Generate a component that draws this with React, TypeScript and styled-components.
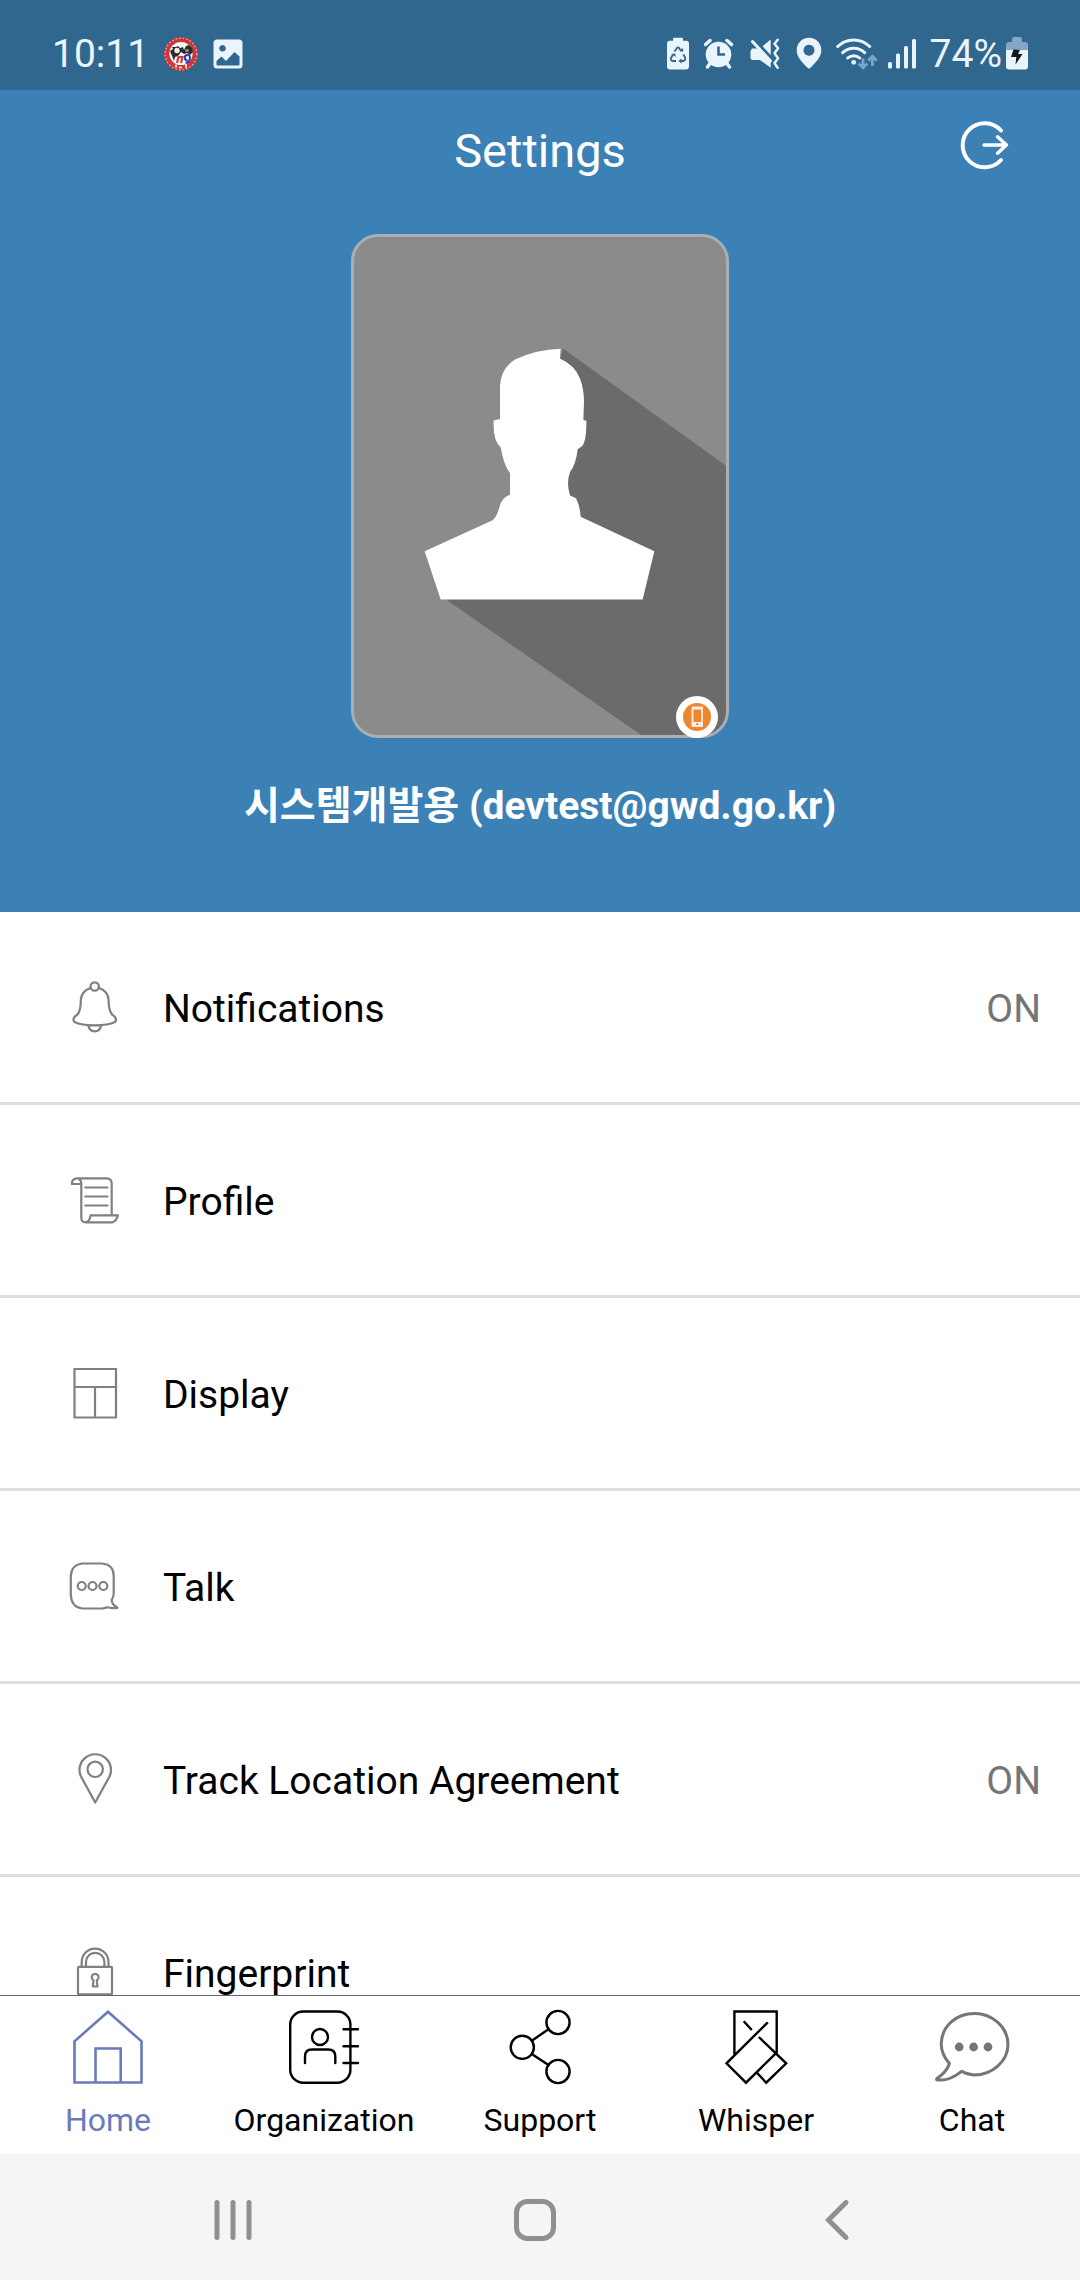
import React from "react";
import styled, { createGlobalStyle } from "styled-components";

const colors = {
  status: "#30678f",
  brand: "#3c81b6",
  statusInk: "#eaf4fc",
  divider: "#dedede",
  icon: "#808080",
  muted: "#757575",
  active: "#6b7abb",
  navIcon: "#909090",
};

const GlobalStyle = createGlobalStyle`
  * { box-sizing: border-box; }
  body {
    margin: 0;
    background: #fff;
    font-family: Roboto, "Noto Sans CJK KR", sans-serif;
  }
  button { font: inherit; border: 0; background: none; padding: 0; cursor: pointer; }
  svg { display: block; flex: none; }
`;

const Screen = styled.div`
  display: flex;
  flex-direction: column;
  height: 100vh;
  overflow: hidden;
`;

const StatusBar = styled.div`
  flex: none;
  display: flex;
  align-items: center;
  justify-content: space-between;
  height: 90px;
  padding: 18px 52px 0;
  background: ${colors.status};
  color: ${colors.statusInk};
  font-size: 39px;
  line-height: 44px;
`;

const StatusGroup = styled.div<{ $gap: number }>`
  display: flex;
  align-items: center;
  gap: ${(p) => p.$gap}px;
`;

const Content = styled.main`
  flex: 1;
  min-height: 0;
  overflow-y: auto;
  scrollbar-width: none;
`;

const ProfileHeader = styled.header`
  display: flex;
  flex-direction: column;
  align-items: center;
  padding-bottom: 78px;
  background: ${colors.brand};
  color: #fff;
`;

const TitleBar = styled.div`
  display: grid;
  grid-template-columns: 1fr auto 1fr;
  align-items: center;
  width: 100%;
  height: 122px;
  padding: 0 68px;
`;

const Title = styled.h1`
  grid-column: 2;
  margin: 0;
  font-size: 47px;
  font-weight: 400;
  line-height: 56px;
`;

const LogoutButton = styled.button`
  justify-self: end;
  padding-bottom: 12px;
  color: #fff;
`;

const AvatarFrame = styled.div`
  position: relative;
  margin-top: 22px;
`;

const Avatar = styled.div`
  width: 378px;
  height: 504px;
  border: 3px solid #a8b0b5;
  border-radius: 27px;
  overflow: hidden;
  background: #8b8b8b;
`;

const DeviceBadge = styled.span`
  position: absolute;
  right: 11px;
  bottom: 0;
`;

const UserName = styled.p`
  margin: 40px 0 0;
  font-size: 39px;
  font-weight: 700;
  line-height: 56px;
`;

const SettingsList = styled.ul`
  margin: 0;
  padding: 0;
  list-style: none;
`;

const SettingsItem = styled.li`
  border-bottom: 3px solid ${colors.divider};
`;

const SettingsButton = styled.button`
  display: flex;
  align-items: center;
  gap: 41px;
  width: 100%;
  height: 190px;
  padding: 0 39px 0 68px;
  color: #000;
  font-size: 39px;
  line-height: 48px;
  text-align: left;
`;

const ItemLabel = styled.span`
  flex: 1;
  padding-top: 4px;
`;

const ItemValue = styled.span`
  padding-top: 4px;
  color: ${colors.muted};
`;

const TabBar = styled.nav`
  flex: none;
  display: grid;
  grid-template-columns: repeat(5, 1fr);
  height: 159px;
  padding-top: 13px;
  border-top: 1px solid #666;
  background: #fff;
`;

const TabLink = styled.a<{ $active?: boolean }>`
  display: flex;
  flex-direction: column;
  align-items: center;
  gap: 15px;
  color: ${(p) => (p.$active ? colors.active : "#000")};
  font-size: 32px;
  line-height: 40px;
  text-decoration: none;
`;

const SystemNav = styled.nav`
  flex: none;
  display: grid;
  grid-template-columns: repeat(3, 1fr);
  height: 126px;
  padding: 6px 92px 0 82px;
  background: #f5f5f5;
`;

const SystemButton = styled.button`
  display: flex;
  align-items: center;
  justify-content: center;
  color: ${colors.navIcon};
`;

const StatusIcon = ({ width, children }: { width: number; children: React.ReactNode }) => (
  <svg width={width} height="36" viewBox={`0 0 ${width} 36`} fill={colors.statusInk} aria-hidden="true">
    {children}
  </svg>
);

const EmblemIcon = () => (
  <StatusIcon width={36}>
    <circle cx="18" cy="18" r="17" fill="#c9363b" />
    <circle cx="18" cy="18" r="15.8" fill="none" stroke="#e9b3b3" strokeWidth="1.2" strokeDasharray="1.6 2" />
    <circle cx="18" cy="17.5" r="11.6" fill="#fdfaf4" />
    <path d="M7 15l3-2-1-2 4 0 2-1 2 2 3-1 1 3 2-4 3-1 3 3 1 4-3 3-3-2-3 1-3-2-3 4-3 1-1 4-2-5z" fill="#2b2b33" />
    <circle cx="14" cy="14.5" r="2.7" fill="#f6eee6" />
    <circle cx="24" cy="14.500" r="1.800" fill="#8f8f6a" />
    <path d="M14 27l1.500-6.500M15.500 21h4L18 27" fill="none" stroke="#d23a3f" strokeWidth="2.200" />
    <path d="M27 21.500a2.600 2.600 0 1 0-2.500 2.800M27 21.500c0 3-2 5-4.500 5.500" fill="none" stroke="#2b3fa8" strokeWidth="2" />
    <path d="M13 31.500v-3M16 31.500h3M23 28v4" stroke="#fff" strokeWidth="1.600" />
  </StatusIcon>
);

const PictureIcon = () => (
  <StatusIcon width={30}>
    <path
      fillRule="evenodd"
      d="M4 3.500h22a3.500 3.500 0 0 1 3.500 3.500v22a3.500 3.500 0 0 1-3.500 3.500H4A3.500 3.500 0 0 1 .5 29V7A3.500 3.500 0 0 1 4 3.500zM9.500 9a3.300 3.300 0 1 0 .01 0zM3.500 25v3.500a1 1 0 0 0 1 1h21a1 1 0 0 0 1-1V20.500l-5-4.500-8.500 9-4.500-4.500z"
    />
  </StatusIcon>
);

const BatteryCareIcon = () => (
  <StatusIcon width={24}>
    <path d="M7 4.700V3a1.300 1.300 0 0 1 1.300-1.300h7.400A1.300 1.300 0 0 1 17 3v1.700h3a3 3 0 0 1 3 3V30.500a3 3 0 0 1-3 3H4a3 3 0 0 1-3-3V7.700a3 3 0 0 1 3-3z" />
    <path
      d="M8.500 15.500l2.300-3.300q1.200-1.400 2.400 0l2 3M17.300 18.300l1.800 3.400q.8 3-2 3.300h-2.800M10 25H6.500q-2.300-.8-1.500-3l1.800-3"
      fill="none"
      stroke={colors.status}
      strokeWidth="1.800"
    />
    <path d="M5 18l4-.5.8 3.500zM13.500 13.500l3.500 2.800.3-4zM15.500 22.500v5l-3.200-2.500z" fill={colors.status} />
  </StatusIcon>
);

const AlarmIcon = () => (
  <StatusIcon width={32}>
    <circle cx="14.500" cy="18.500" r="12.800" />
    <path d="M1.500 8.500L6 4.500M27.500 8.500L23 4.500M6 27.500L3.500 31M23 27.500l2.500 3.500" stroke={colors.statusInk} strokeWidth="3.400" strokeLinecap="round" />
    <path d="M14.500 10.500v8h6.500" fill="none" stroke={colors.status} strokeWidth="2.600" />
  </StatusIcon>
);

const MuteVibrateIcon = () => (
  <StatusIcon width={32}>
    <path d="M2 12.500h8L20.700 3.500v28.300L10 24H3q-2.500 0-2.500-2.500V15z" />
    <path d="M4 3.500L22 23" stroke={colors.status} strokeWidth="3.400" />
    <path d="M2.500 5.500L20.500 25" stroke={colors.statusInk} strokeWidth="3" strokeLinecap="round" />
    <path d="M27.700 3.700l-3.200 4 3.600 4.600-3.600 5 3.600 5-3.600 5 3.200 4.500" fill="none" stroke={colors.statusInk} strokeWidth="2.500" strokeLinejoin="round" strokeLinecap="round" />
  </StatusIcon>
);

const LocationIcon = () => (
  <StatusIcon width={26}>
    <path fillRule="evenodd" d="M13 1.700A12.300 12.300 0 0 1 25.300 14.500C25.300 22 18 28 14.500 31.700q-1.500 1.400-3 0C8 28 .7 22 .7 14.500A12.300 12.300 0 0 1 13 1.700zM13 8.800a5.500 5.500 0 1 0 .01 0z" />
  </StatusIcon>
);

const WifiIcon = () => (
  <StatusIcon width={42}>
    <g fill="none" stroke={colors.statusInk} strokeWidth="3" strokeLinecap="round">
      <path d="M1.700 10.500a23 23 0 0 1 32 0M6.700 16.600a16 16 0 0 1 22 0M11.700 22a9 9 0 0 1 12 0" />
    </g>
    <circle cx="17.700" cy="26.300" r="2.400" />
    <path d="M27 22.500V31M22.800 27.500l4.200 4.200 4.200-4.200M36.400 30v-9M32.200 24.500l4.200-4.200 4.200 4.200" fill="none" stroke="#79a5cd" strokeWidth="2.800" />
  </StatusIcon>
);

const SignalIcon = () => (
  <StatusIcon width={28}>
    <rect x="0" y="26" width="4" height="6.500" rx="1.500" />
    <rect x="8" y="17.500" width="4" height="15" rx="1.500" />
    <rect x="16" y="10" width="4" height="22.500" rx="1.500" />
    <rect x="24" y="3" width="4" height="29.500" rx="1.500" />
  </StatusIcon>
);

const BatteryIcon = () => (
  <StatusIcon width={22}>
    <path d="M6 6V3a2 2 0 0 1 2-2h6a2 2 0 0 1 2 2v3h3a3 3 0 0 1 3 3v5H0V9a3 3 0 0 1 3-3z" fill="#83a8c4" />
    <path d="M0 14h22v16.500a3 3 0 0 1-3 3H3a3 3 0 0 1-3-3z" />
    <path d="M7.500 13.500L14 14l-2 4h4.500L9.500 28.500l.8-7.500H5z" fill="#14181c" />
  </StatusIcon>
);

const LogoutIcon = () => (
  <svg width="52" height="52" viewBox="0 0 52 52" fill="none" stroke="currentColor" strokeLinecap="round" strokeLinejoin="round" aria-hidden="true">
    <path d="M41 11.500a22 22 0 1 0 0 29.500" strokeWidth="4" />
    <path d="M24 26h22.500M37.500 17.800l9 8.200-9 8.200" strokeWidth="3.400" />
  </svg>
);

const Silhouette = () => (
  <svg width="372" height="498" viewBox="0 0 372 498" role="img" aria-label="Profile picture">
    <g transform="translate(-24 -17) scale(.33333 .34438)">
      <path d="M700 374L1190 715V1500H940L345 1100L600 900L690 402z" fill="#6b6b6b" />
      <path
        d="M692 374L690 402Q735 422 750 460Q762 490 762 530L760 580L769 584Q770 640 757 656L743 666Q738 710 720 732Q708 765 720 800L738 808Q750 830 752 862L973 962L938 1102H332L284 962L488 872Q500 862 508 835Q515 805 540 798V735Q522 715 512 660Q488 640 491 582L510 578V480Q514 430 555 405Q620 376 692 374z"
        fill="#fff"
      />
    </g>
  </svg>
);

const PhoneBadgeIcon = () => (
  <svg width="42" height="42" viewBox="0 0 42 42" role="img" aria-label="Mobile">
    <circle cx="21" cy="21" r="21" fill="#fff" />
    <circle cx="21" cy="21" r="14" fill="#ee862f" />
    <rect x="16.500" y="11.500" width="9.500" height="18.500" fill="none" stroke="#fdf0e3" strokeWidth="1.800" />
    <path d="M16 11h10.500v2.500H16zM16 26h10.500v4.500H16z" fill="#fdf0e3" />
    <circle cx="21.200" cy="28.200" r="1.100" fill="#ee862f" />
  </svg>
);

const RowIcon = ({ children }: { children: React.ReactNode }) => (
  <svg width="54" height="54" viewBox="0 0 54 54" fill="none" stroke={colors.icon} strokeWidth="2.200" strokeLinejoin="round" strokeLinecap="round" aria-hidden="true">
    {children}
  </svg>
);

const items = [
  {
    label: "Notifications",
    value: "ON",
    icon: (
      <RowIcon>
        <circle cx="26.700" cy="6.500" r="4.200" />
        <path d="M22.500 8Q13.500 11 12.800 20Q13 30 9.500 34.500Q3.500 38.500 6.500 42Q13 45.300 26.700 45.300T47 42Q50 38.500 44 34.500Q40.500 30 40.600 20Q40 11 31 8M20.300 45.500Q21.500 51.300 26.700 51.300T33.200 45.500" />
      </RowIcon>
    ),
  },
  {
    label: "Profile",
    icon: (
      <RowIcon>
        <path d="M13.300 11H3.800Q4 5.300 9 5.300H38.500Q43.700 5.500 43.700 10.500V42.300M10.500 5.300Q13.300 7 13.300 11V45Q13.500 49.300 17.500 49.300H44.500Q48.500 48 50 42.300H22.500Q21.500 49 17.500 49.300M17.300 14.500H39.500M17.300 23.500H39.500M17.300 32.500H39.500" />
      </RowIcon>
    ),
  },
  {
    label: "Display",
    icon: (
      <RowIcon>
        <path d="M6.500 3H48V51.500H6.500zM6.500 21H48M27 21V51.500" strokeLinejoin="miter" />
      </RowIcon>
    ),
  },
  {
    label: "Talk",
    icon: (
      <RowIcon>
        <path d="M14.500 4.500H34Q45.700 5.500 45.700 17V35Q45.500 38 43.700 41Q43.500 45 49.500 48.800Q43 49.500 39 48.300Q36.500 49.500 34 49.500H14.500Q3.500 48.500 2.800 36V17Q3.500 5.500 14.500 4.500z" />
        <circle cx="13.700" cy="27" r="4" />
        <circle cx="24.500" cy="27" r="4" />
        <circle cx="35.300" cy="27" r="4" />
      </RowIcon>
    ),
  },
  {
    label: "Track Location Agreement",
    value: "ON",
    icon: (
      <RowIcon>
        <path d="M27.200 50.500L13 24.500Q11.500 21.500 11.500 18A15.700 15.700 0 0 1 43 18Q43 21.500 41.500 24.500z" />
        <circle cx="27.200" cy="17.300" r="7.700" />
      </RowIcon>
    ),
  },
  {
    label: "Fingerprint",
    icon: (
      <RowIcon>
        <rect x="10" y="21.800" width="34" height="27.500" rx="1" />
        <path d="M13.700 21.800V17A13.400 13.400 0 0 1 40.500 17V21.800M18 21.800V17A9.200 9.200 0 0 1 36.400 17V21.800M25.500 35.200A3.400 3.400 0 1 1 28.800 35.200L29.500 41.500H24.800z" />
      </RowIcon>
    ),
  },
];

const TabIcon = ({ children, stroke = "currentColor", weight = 2 }: { children: React.ReactNode; stroke?: string; weight?: number }) => (
  <svg width="80" height="76" viewBox="0 0 80 76" fill="none" stroke={stroke} strokeWidth={weight} aria-hidden="true">
    {children}
  </svg>
);

const tabs = [
  {
    label: "Home",
    icon: (
      <TabIcon weight={2.6}>
        <path d="M6.500 73.500V32.300L40 2.800L73.500 32.300V73.500zM27.500 73.500V39.500H52.700V73.500" />
      </TabIcon>
    ),
  },
  {
    label: "Organization",
    icon: (
      <TabIcon weight={2.4}>
        <rect x="6.200" y="2.500" width="60.200" height="71.200" rx="13" />
        <circle cx="36" cy="28" r="8" />
        <path d="M21 54V47.500Q21 40.500 28 40.500H44.300Q51.300 40.500 51.300 47.500V54M59.500 20.300H74M59.500 37.300H74M59.500 54H74" strokeLinecap="round" />
      </TabIcon>
    ),
  },
  {
    label: "Support",
    icon: (
      <TabIcon weight={2.4}>
        <circle cx="58" cy="13.500" r="11.600" />
        <circle cx="22.300" cy="38.300" r="11.600" />
        <circle cx="58" cy="62.500" r="11.600" />
        <path d="M31.800 31.700L48.500 20.200M31.800 44.900L48.500 56" />
      </TabIcon>
    ),
  },
  {
    label: "Whisper",
    icon: (
      <TabIcon weight={2.4}>
        <path d="M18.400 45.500V2.500H60.700V45M51.800 13.300L10.500 54.300L30 73.700L59.800 44.300M27.700 12.300L35.800 21M42.800 28L70.200 54.300L50.200 73.700L40.700 63.500" />
      </TabIcon>
    ),
  },
  {
    label: "Chat",
    icon: (
      <TabIcon stroke={colors.muted} weight={3}>
        <path d="M17.500 54.500C11.500 48 9.200 41 9.200 34.500C10 16 25 4.500 42.500 4.500S76 18 76 35.500S59 66 42.500 66Q35 65.500 29.500 62.300C22 68.500 13 72 4.700 70.800Q4 69.500 7 68Q15 62 17.500 54.500z" strokeLinejoin="round" />
        <g fill={colors.muted} stroke="none">
          <circle cx="27.200" cy="38" r="4.400" />
          <circle cx="41.600" cy="38" r="4.400" />
          <circle cx="56" cy="38" r="4.400" />
        </g>
      </TabIcon>
    ),
  },
];

export default function App() {
  return (
    <Screen>
      <GlobalStyle />
      <StatusBar>
        <StatusGroup $gap={14}>
          <span>10:11</span>
          <EmblemIcon />
          <PictureIcon />
        </StatusGroup>
        <StatusGroup $gap={14}>
          <StatusGroup $gap={10}>
            <StatusGroup $gap={14}>
              <BatteryCareIcon />
              <AlarmIcon />
              <MuteVibrateIcon />
              <LocationIcon />
              <WifiIcon />
            </StatusGroup>
            <SignalIcon />
          </StatusGroup>
          <StatusGroup $gap={4}>
            <span>74%</span>
            <BatteryIcon />
          </StatusGroup>
        </StatusGroup>
      </StatusBar>

      <Content>
        <ProfileHeader>
          <TitleBar>
            <Title>Settings</Title>
            <LogoutButton type="button" aria-label="Log out">
              <LogoutIcon />
            </LogoutButton>
          </TitleBar>
          <AvatarFrame>
            <Avatar>
              <Silhouette />
            </Avatar>
            <DeviceBadge>
              <PhoneBadgeIcon />
            </DeviceBadge>
          </AvatarFrame>
          <UserName>시스템개발용 (devtest@gwd.go.kr)</UserName>
        </ProfileHeader>

        <SettingsList>
          {items.map((item) => (
            <SettingsItem key={item.label}>
              <SettingsButton type="button">
                {item.icon}
                <ItemLabel>{item.label}</ItemLabel>
                {item.value && <ItemValue>{item.value}</ItemValue>}
              </SettingsButton>
            </SettingsItem>
          ))}
        </SettingsList>
      </Content>

      <TabBar aria-label="Main">
        {tabs.map((tab) => (
          <TabLink key={tab.label} href="#" $active={tab.label === "Home"}>
            {tab.icon}
            <span>{tab.label}</span>
          </TabLink>
        ))}
      </TabBar>

      <SystemNav aria-label="System">
        <SystemButton type="button" aria-label="Recent apps">
          <svg width="44" height="44" viewBox="0 0 44 44" stroke="currentColor" strokeWidth="5" strokeLinecap="round">
            <path d="M6 4.500v35M22 4.500v35M38 4.500v35" />
          </svg>
        </SystemButton>
        <SystemButton type="button" aria-label="Home">
          <svg width="44" height="44" viewBox="0 0 44 44" fill="none" stroke="currentColor" strokeWidth="5">
            <rect x="3.500" y="3.500" width="37" height="37" rx="11" />
          </svg>
        </SystemButton>
        <SystemButton type="button" aria-label="Back">
          <svg width="44" height="44" viewBox="0 0 44 44" fill="none" stroke="currentColor" strokeWidth="5" strokeLinecap="round">
            <path d="M31 4.500L13.500 22L31 39.500" />
          </svg>
        </SystemButton>
      </SystemNav>
    </Screen>
  );
}
